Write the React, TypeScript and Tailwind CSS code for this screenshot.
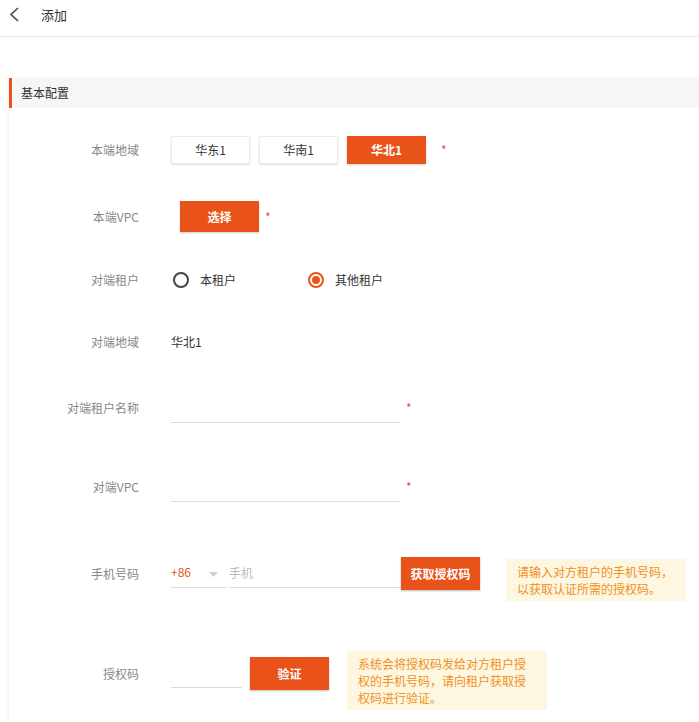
import React, { useState } from 'react';

const ORANGE = 'bg-[#e9531a]';

const Label: React.FC<{ children: React.ReactNode; className?: string }> = ({ children, className = '' }) => (
  <div className={`w-[130px] shrink-0 text-right text-[12px] text-[#888] flex items-center justify-end ${className}`}>
    {children}
  </div>
);

const Star: React.FC<{ className?: string }> = ({ className = '' }) => (
  <span className={`text-[12px] text-[#f04848] leading-none ${className}`}>*</span>
);

const Radio: React.FC<{ checked: boolean; label: string; onClick: () => void; className?: string }> = ({
  checked,
  label,
  onClick,
  className = '',
}) => (
  <div className={`flex items-center cursor-pointer ${className}`} onClick={onClick}>
    {checked ? (
      <span className="w-[16px] h-[16px] rounded-full border-2 border-[#e9531a] flex items-center justify-center">
        <span className="w-[8px] h-[8px] rounded-full bg-[#e9531a]" />
      </span>
    ) : (
      <span className="w-[16px] h-[16px] rounded-full border-2 border-[#444]" />
    )}
    <span className="ml-[11px] text-[12px] text-[#333]">{label}</span>
  </div>
);

export default function App() {
  const [region, setRegion] = useState('华北1');
  const [tenant, setTenant] = useState('other');
  const regions = ['华东1', '华南1', '华北1'];

  return (
    <div
      className="w-[699px] h-[722px] bg-white overflow-hidden"
      style={{ fontFamily: '"Noto Sans CJK SC", "Liberation Sans", sans-serif' }}
    >
      {/* top bar */}
      <div className="h-[37px] border-b border-[#e6e6e6] flex items-start pt-[6px]">
        <svg width="30" height="17" viewBox="0 0 30 17">
          <polyline points="18,2 11,8.5 18,15" fill="none" stroke="#444" strokeWidth="1.6" />
        </svg>
        <span className="ml-[11px] text-[13px] text-[#333] leading-[17px]">添加</span>
      </div>

      {/* card */}
      <div className="ml-[9px] mt-[41px] shadow-[-1px_0_2px_rgba(0,0,0,0.07)] h-[700px]">
        <div className="h-[30px] bg-[#f6f6f6] border-l-[3px] border-[#e9531a] flex items-center pl-[9px]">
          <span className="text-[12px] text-[#333]">基本配置</span>
        </div>

        {/* 本端地域 */}
        <div className="flex items-center mt-[28px] h-[28px]">
          <Label className="h-[28px]">本端地域</Label>
          <div className="ml-[32px] flex items-center gap-[9px]">
            {regions.map((r) =>
              r === region ? (
                <button
                  key={r}
                  onClick={() => setRegion(r)}
                  className={`w-[79px] h-[28px] ${ORANGE} text-white text-[12px] font-bold shadow-[0_1px_2px_rgba(0,0,0,0.2)]`}
                >
                  {r}
                </button>
              ) : (
                <button
                  key={r}
                  onClick={() => setRegion(r)}
                  className="w-[79px] h-[28px] bg-white text-[#333] text-[12px] border border-[#f3e8e8] rounded-[2px] shadow-[0_1px_2px_rgba(0,0,0,0.12)]"
                >
                  {r}
                </button>
              )
            )}
          </div>
          <Star className="ml-[15px]" />
        </div>

        {/* 本端VPC */}
        <div className="flex items-center mt-[37px] h-[31px]">
          <Label className="h-[31px]">本端VPC</Label>
          <button
            className={`ml-[41px] w-[79px] h-[31px] ${ORANGE} text-white text-[12px] font-bold shadow-[0_1px_2px_rgba(0,0,0,0.2)]`}
          >
            选择
          </button>
          <Star className="ml-[6px]" />
        </div>

        {/* 对端租户 */}
        <div className="flex items-center mt-[38px] h-[20px]">
          <Label className="h-[20px]">对端租户</Label>
          <Radio
            className="ml-[34px] w-[135px]"
            checked={tenant === 'self'}
            label="本租户"
            onClick={() => setTenant('self')}
          />
          <Radio checked={tenant === 'other'} label="其他租户" onClick={() => setTenant('other')} />
        </div>

        {/* 对端地域 */}
        <div className="flex items-center mt-[42px] h-[20px]">
          <Label className="h-[20px]">对端地域</Label>
          <span className="ml-[32px] text-[12px] text-[#333]">华北1</span>
        </div>

        {/* 对端租户名称 */}
        <div className="flex items-center mt-[41px] h-[30px]">
          <Label className="h-[30px]">对端租户名称</Label>
          <input className="ml-[32px] w-[229px] h-[30px] border-b border-[#ddd] outline-none text-[12px]" />
          <Star className="ml-[6px]" />
        </div>

        {/* 对端VPC */}
        <div className="flex items-center mt-[49px] h-[30px]">
          <Label className="h-[30px]">对端VPC</Label>
          <input className="ml-[32px] w-[229px] h-[30px] border-b border-[#ddd] outline-none text-[12px]" />
          <Star className="ml-[6px]" />
        </div>

        {/* 手机号码 */}
        <div className="flex items-start mt-[55px]">
          <Label className="h-[33px]">手机号码</Label>
          <div className="ml-[32px] w-[55px] h-[31px] border-b border-[#ddd] flex items-center justify-between pr-[8px]">
            <span className="text-[12px] text-[#e9531a] -mt-[1px]">+86</span>
            <svg width="9" height="5" viewBox="0 0 9 5" className="mt-[4px]">
              <polygon points="0,0 9,0 4.5,5" fill="#ccc" />
            </svg>
          </div>
          <input
            placeholder="手机"
            className="ml-[3px] w-[172px] h-[31px] border-b border-[#ddd] outline-none text-[12px] placeholder:text-[#bbb]"
          />
          <button
            className={`w-[79px] h-[33px] ${ORANGE} text-white text-[12px] font-bold shadow-[0_1px_2px_rgba(0,0,0,0.25)]`}
          >
            获取授权码
          </button>
          <div className="ml-[26px] mt-[2px] w-[180px] h-[42px] bg-[#fdf7e1] px-[11px] py-[4px] text-[12px] leading-[17px] text-[#f0901e]">
            请输入对方租户的手机号码，
            <br />
            以获取认证所需的授权码。
          </div>
        </div>

        {/* 授权码 */}
        <div className="flex items-start mt-[50px]">
          <Label className="mt-[6px] h-[33px]">授权码</Label>
          <input className="ml-[32px] mt-[6px] w-[71px] h-[31px] border-b border-[#ddd] outline-none text-[12px]" />
          <button
            className={`ml-[8px] mt-[6px] w-[79px] h-[33px] ${ORANGE} text-white text-[12px] font-bold shadow-[0_1px_2px_rgba(0,0,0,0.25)]`}
          >
            验证
          </button>
          <div className="ml-[18px] w-[200px] h-[59px] bg-[#fdf7e1] px-[11px] py-[4px] text-[12px] leading-[17px] text-[#f0901e]">
            系统会将授权码发给对方租户授权的手机号码，请向租户获取授权码进行验证。
          </div>
        </div>
      </div>
    </div>
  );
}
